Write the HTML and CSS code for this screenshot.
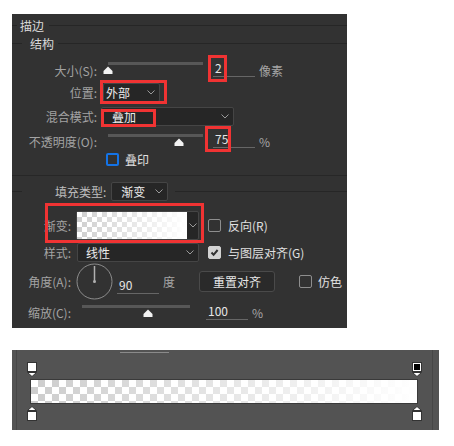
FILE: index.html
```html
<!DOCTYPE html>
<html lang="zh-CN">
<head>
    <meta charset="UTF-8">
    <title>描边</title>
    <link rel="stylesheet" href="styles.css">
</head>
<body>
    <div class="panel">
        <div class="legend title">
            <span class="rule short"></span>
            <span class="legend-text">描边</span>
            <span class="rule"></span>
        </div>
        <div class="legend sub">
            <span class="rule tiny"></span>
            <span class="legend-text">结构</span>
            <span class="rule"></span>
        </div>

        <div class="row row-size">
            <span class="label wide">大小(S):</span>
            <div class="slider s1"><span class="track"></span><svg class="thumb" style="left: 0%" width="10" height="8" viewBox="0 0 10 8"><path d="M5 0.5 L9.5 5 L9.5 8 L0.5 8 L0.5 5 Z" fill="#f2f2f2"/></svg></div>
            <span class="field f1">2</span>
            <span class="unit">像素</span>
            <span class="mark m-size"></span>
        </div>

        <div class="row row-pos">
            <span class="label wide">位置:</span>
            <div class="select sel-pos"><span>外部</span><svg class="chev" width="8" height="5" viewBox="0 0 8 5"><path d="M0.5 0.5 L4 4 L7.5 0.5" fill="none" stroke="#9a9a9a"/></svg></div>
            <span class="mark m-pos"></span>
        </div>

        <div class="row row-blend">
            <span class="label wide">混合模式:</span>
            <div class="select sel-blend"><span>叠加</span><svg class="chev" width="8" height="5" viewBox="0 0 8 5"><path d="M0.5 0.5 L4 4 L7.5 0.5" fill="none" stroke="#9a9a9a"/></svg></div>
            <span class="mark m-blend"></span>
        </div>

        <div class="row row-opacity">
            <span class="label wide">不透明度(O):</span>
            <div class="slider s2"><span class="track"></span><svg class="thumb" style="left: 75%" width="10" height="8" viewBox="0 0 10 8"><path d="M5 0.5 L9.5 5 L9.5 8 L0.5 8 L0.5 5 Z" fill="#f2f2f2"/></svg></div>
            <span class="field f1">75</span>
            <span class="unit">%</span>
            <span class="mark m-opacity"></span>
        </div>

        <div class="row row-over">
            <span class="check focus"></span>
            <span class="text">叠印</span>
        </div>

        <div class="separator"></div>

        <div class="row row-fill">
            <span class="rule tiny"></span>
            <span class="label fill-label">填充类型:</span>
            <div class="select sel-fill"><span>渐变</span><svg class="chev" width="8" height="5" viewBox="0 0 8 5"><path d="M0.5 0.5 L4 4 L7.5 0.5" fill="none" stroke="#9a9a9a"/></svg></div>
            <span class="rule"></span>
        </div>

        <div class="row row-grad">
            <span class="label narrow">渐变:</span>
            <div class="grad-picker">
                <span class="swatch"></span>
                <span class="grad-arrow"><svg width="8" height="5" viewBox="0 0 8 5"><path d="M0.5 0.5 L4 4 L7.5 0.5" fill="none" stroke="#9a9a9a"/></svg></span>
            </div>
            <span class="check"></span>
            <span class="text">反向(R)</span>
            <span class="mark m-grad"></span>
        </div>

        <div class="row row-style">
            <span class="label narrow">样式:</span>
            <div class="select sel-style"><span>线性</span><svg class="chev" width="8" height="5" viewBox="0 0 8 5"><path d="M0.5 0.5 L4 4 L7.5 0.5" fill="none" stroke="#9a9a9a"/></svg></div>
            <span class="check checked"><svg width="11" height="11" viewBox="0 0 11 11"><path d="M2.5 5.5 L4.6 7.8 L8.6 3" fill="none" stroke="#303030" stroke-width="2"/></svg></span>
            <span class="text">与图层对齐(G)</span>
        </div>

        <div class="row row-angle">
            <span class="label narrow">角度(A):</span>
            <svg class="dial" width="37" height="37" viewBox="0 0 37 37">
                <circle cx="18.5" cy="18.5" r="17.5" fill="none" stroke="#8c8c8c"/>
                <line x1="18.5" y1="3" x2="18.5" y2="18" stroke="#b0b0b0" stroke-width="1.5"/>
                <circle cx="18.5" cy="18.5" r="1.5" fill="#b0b0b0"/>
            </svg>
            <span class="field f2">90</span>
            <span class="unit">度</span>
            <button class="btn">重置对齐</button>
            <span class="check dither"></span>
            <span class="text">仿色</span>
        </div>

        <div class="row row-scale">
            <span class="label narrow">缩放(C):</span>
            <div class="slider s3"><span class="track"></span><svg class="thumb" style="left: 61%" width="10" height="8" viewBox="0 0 10 8"><path d="M5 0.5 L9.5 5 L9.5 8 L0.5 8 L0.5 5 Z" fill="#f2f2f2"/></svg></div>
            <span class="field f3">100</span>
            <span class="unit">%</span>
        </div>
    </div>

    <div class="editor">
        <div class="editor-inner">
            <div class="grip"></div>
            <div class="stops">
                <svg width="10" height="15" viewBox="0 0 10 15"><rect x="0.5" y="0.5" width="9" height="9" fill="#fff" stroke="#333"/><path d="M0.5 10.5 L9.5 10.5 L5 14.5 Z" fill="#fff" stroke="#333"/></svg>
                <svg width="10" height="15" viewBox="0 0 10 15"><rect x="0.5" y="0.5" width="9" height="9" fill="#fff" stroke="#333"/><rect x="2" y="2" width="6" height="6" fill="#000"/><path d="M0.5 10.5 L9.5 10.5 L5 14.5 Z" fill="#fff" stroke="#333"/></svg>
            </div>
            <div class="bar"></div>
            <div class="stops">
                <svg width="10" height="15" viewBox="0 0 10 15"><path d="M5 0.5 L9.5 4.5 L0.5 4.5 Z" fill="#fff" stroke="#333"/><rect x="0.5" y="5.5" width="9" height="9" fill="#fff" stroke="#333"/></svg>
                <svg width="10" height="15" viewBox="0 0 10 15"><path d="M5 0.5 L9.5 4.5 L0.5 4.5 Z" fill="#fff" stroke="#333"/><rect x="0.5" y="5.5" width="9" height="9" fill="#fff" stroke="#333"/></svg>
            </div>
        </div>
    </div>
</body>
</html>
```

FILE: styles.css
```css
* {
    box-sizing: border-box;
}

body {
    margin: 0;
    background-color: #ffffff;
    font-family: "Noto Sans CJK SC", "Liberation Sans", sans-serif;
    font-size: 12px;
    color: #a6a6a6;
}

.panel {
    margin: 14px 0 0 12px;
    width: 335px;
    height: 314px;
    background-color: #323232;
    overflow: hidden;
}

/* group headings */
.legend {
    display: flex;
    align-items: center;
    color: #dadada;
}

.title {
    height: 22px;
}

.sub {
    height: 14px;
}

.rule {
    flex: 1;
    height: 1px;
    background-color: #262626;
}

.rule.short {
    flex: none;
    width: 5px;
    margin-right: 3px;
}

.rule.tiny {
    flex: none;
    width: 10px;
    margin-right: 8px;
}

.title .legend-text {
    margin-right: 5px;
}

.sub .legend-text {
    margin-right: 4px;
}

/* rows */
.row {
    position: relative;
    display: flex;
    align-items: center;
    white-space: nowrap;
}

.label {
    flex: none;
    text-align: right;
    color: #a3a3a3;
}

.label.wide {
    width: 85px;
}

.label.narrow {
    width: 59px;
}

.row-size {
    margin-top: 9px;
    height: 22px;
}

.row-pos {
    height: 22px;
}

.row-blend {
    margin-top: 2px;
    height: 22px;
}

.row-opacity {
    margin-top: 3px;
    height: 22px;
}

.row-over {
    height: 14px;
}

.separator {
    margin-top: 9px;
    height: 1px;
    background-color: #272727;
}

.row-fill {
    margin-top: 5px;
    height: 21px;
}

.row-grad {
    margin-top: 8px;
    height: 30px;
}

.row-style {
    margin-top: 3px;
    height: 19px;
}

.row-angle {
    margin-top: 1px;
    height: 37px;
}

.row-scale {
    margin-top: 3px;
    height: 18px;
}

/* sliders */
.slider {
    position: relative;
    align-self: flex-start;
    height: 13px;
}

.track {
    display: block;
    height: 3px;
    background-color: #575757;
}

.thumb {
    position: absolute;
    top: 4px;
    transform: translateX(-50%);
}

.s1 {
    margin: 3px 0 0 11px;
    width: 95px;
}

.s2 {
    margin: 4px 0 0 11px;
    width: 95px;
}

.s3 {
    margin: 2px 0 0 11px;
    width: 108px;
}

/* number fields */
.field {
    width: 42px;
    height: 17px;
    line-height: 16px;
    padding-left: 2px;
    color: #e6e6e6;
    border-bottom: 1px solid #666666;
}

.f1 {
    align-self: flex-start;
    margin: 1px 0 0 10px;
}

.f2 {
    margin: 8px 0 0 4px;
}

.f3 {
    align-self: flex-start;
    margin: 0 0 0 16px;
}

.unit {
    margin-left: 4px;
    color: #a6a6a6;
}

/* dropdowns */
.select {
    display: flex;
    align-items: center;
    justify-content: space-between;
    height: 19px;
    background-color: #262626;
    border: 1px solid #454545;
    border-radius: 2px;
    color: #ececec;
}

.chev {
    flex: none;
}

.sel-pos {
    margin-left: 6px;
    width: 57px;
    padding: 0 4px 0 2px;
}

.sel-blend {
    margin-left: 4px;
    width: 133px;
    padding: 0 4px 0 10px;
}

.sel-fill {
    margin-left: 5px;
    width: 57px;
    padding: 0 4px 0 9px;
    margin-right: 7px;
}

.sel-style {
    margin-left: 6px;
    width: 122px;
    padding: 0 4px 0 8px;
}

.fill-label {
    margin-left: 25px;
    color: #bdbdbd;
}

/* gradient picker */
.grad-picker {
    display: flex;
    margin-left: 5px;
    width: 123px;
    height: 29px;
    background-color: #262626;
    border: 1px solid #454545;
    border-radius: 2px;
}

.swatch {
    width: 110px;
    background-color: #ffffff;
    background-image:
        linear-gradient(to right, rgba(255, 255, 255, 0), #ffffff),
        repeating-conic-gradient(#cfcfcf 0 25%, #ffffff 0 50%);
    background-size: 100% 100%, 10px 10px;
}

.grad-arrow {
    flex: 1;
    display: flex;
    align-items: center;
    justify-content: center;
}

/* checkboxes */
.check {
    flex: none;
    display: flex;
    align-items: center;
    justify-content: center;
    width: 13px;
    height: 13px;
    margin-left: 9px;
    border: 1px solid #8e8e8e;
    border-radius: 2px;
}

.check.focus {
    margin-left: 94px;
    border: 2px solid #1473e6;
}

.check.checked {
    background-color: #d2d2d2;
    border-color: #d2d2d2;
}

.check.dither {
    margin-left: 24px;
}

.text {
    margin-left: 7px;
    color: #e0e0e0;
}

.row-over .text {
    margin-left: 6px;
}

.row-angle .text {
    margin-left: 6px;
}

/* angle */
.dial {
    margin-left: 5px;
    flex: none;
}

.btn {
    margin-left: 24px;
    width: 76px;
    height: 21px;
    padding: 0;
    font-family: inherit;
    font-size: 12px;
    color: #e6e6e6;
    background-color: #2a2a2a;
    border: 1px solid #4a4a4a;
    border-radius: 3px;
}

/* red annotation boxes */
.mark {
    position: absolute;
    border: 3px solid #f03333;
}

.m-size {
    left: 196px;
    top: -4px;
    width: 19px;
    height: 27px;
}

.m-pos {
    left: 88px;
    top: -1px;
    width: 67px;
    height: 24px;
}

.m-blend {
    left: 89px;
    top: 4px;
    width: 55px;
    height: 18px;
}

.m-opacity {
    left: 193px;
    top: -4px;
    width: 26px;
    height: 26px;
}

.m-grad {
    left: 33px;
    top: -7px;
    width: 159px;
    height: 40px;
}

/* gradient editor strip */
.editor {
    margin: 22px 0 0 12px;
    width: 427px;
    height: 80px;
    padding-left: 4px;
    padding-right: 6px;
    background-color: #535353;
}

.editor-inner {
    height: 80px;
    border-left: 1px solid #464646;
    border-right: 1px solid #464646;
}

.grip {
    margin: 0 0 0 103px;
    padding-top: 2px;
    width: 49px;
    height: 3px;
    border-bottom: 1px solid #8a8a8a;
}

.stops {
    display: flex;
    justify-content: space-between;
    height: 15px;
    padding: 0 10px;
}

.grip + .stops {
    margin-top: 9px;
}

.stops svg {
    display: block;
}

.bar {
    margin: 2px 0 2px 13px;
    width: 388px;
    height: 25px;
    border: 1px solid #3a3a3a;
    background-color: #ffffff;
    background-image:
        linear-gradient(to right, rgba(255, 255, 255, 0), #ffffff),
        repeating-conic-gradient(#cdcdcd 0 25%, #ffffff 0 50%);
    background-size: 100% 100%, 14px 14px;
}
```
